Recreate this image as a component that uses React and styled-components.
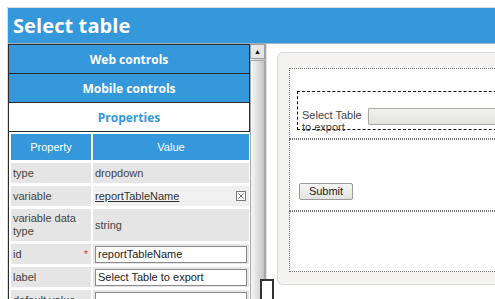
import React from "react";
import styled, { createGlobalStyle } from "styled-components";

const GlobalStyle = createGlobalStyle`
  html, body {
    margin: 0;
    padding: 0;
    background: #fff;
    font-family: "Liberation Sans", Arial, sans-serif;
    overflow: hidden;
  }
`;

const blue = "#3498db";

const Frame = styled.div`
  position: relative;
  width: 495px;
  height: 299px;
  overflow: hidden;
  box-sizing: border-box;
  padding: 7px 0 0 7px;
`;

const Window = styled.div`
  border-top: 1px solid #dcdcdc;
  border-left: 1px solid #dcdcdc;
  height: 292px;
  display: flex;
  flex-direction: column;
`;

const Header = styled.div`
  height: 35px;
  flex-shrink: 0;
  background: ${blue};
  border-bottom: 1px solid #a3b3c2;
  color: #fff;
  font-family: "Open Sans", "Liberation Sans", sans-serif;
  font-weight: 700;
  font-size: 20px;
  line-height: 35px;
  padding-left: 5px;
  letter-spacing: 0.1px;
`;

const Body = styled.div`
  display: flex;
  flex: 1;
  min-height: 0;
`;

const LeftPanel = styled.div`
  width: 242px;
  flex-shrink: 0;
  border-left: 1px solid #2a2a2a;
  box-sizing: border-box;
  overflow: hidden;
`;

const Tab = styled.div`
  height: 30px;
  box-sizing: border-box;
  border: 1px solid #2a2a2a;
  border-left: none;
  margin-top: ${(p) => (p.$first ? "0" : "-1px")};
  background: ${(p) => (p.$active ? "#fff" : blue)};
  color: ${(p) => (p.$active ? blue : "#fff")};
  font-family: "Open Sans", "Liberation Sans", sans-serif;
  font-weight: 700;
  font-size: 12px;
  display: flex;
  align-items: center;
  justify-content: center;
`;

const PropTable = styled.table`
  border-collapse: separate;
  border-spacing: 2px 3px;
  margin-top: -1px;
  margin-left: 0;
  width: 242px;
  table-layout: fixed;
  font-size: 11px;
  color: #444;
`;

const HeadCell = styled.th`
  background: ${blue};
  color: #fff;
  font-weight: 400;
  height: 26px;
  padding: 0;
`;

const Cell = styled.td`
  position: relative;
  background: ${(p) => (p.$light ? "#f0f0f0" : "#e5e5e5")};
  height: ${(p) => p.$h || 20}px;
  padding: 0 2px;
  line-height: 13px;
  vertical-align: middle;
`;

const Required = styled.span`
  position: absolute;
  right: 3px;
  top: 4px;
  color: #e03030;
  font-size: 10px;
`;

const VarLink = styled.span`
  text-decoration: underline;
  color: #333;
`;

const ClearIcon = styled.svg`
  position: absolute;
  right: 3px;
  top: 5px;
`;

const TextInput = styled.input`
  display: block;
  box-sizing: border-box;
  width: 152px;
  height: 17px;
  border: 1px solid #8a8a8a;
  padding: 0 2px;
  font-family: "Liberation Sans", Arial, sans-serif;
  font-size: 11px;
  color: #222;
  background: #fff;
`;

const Scrollbar = styled.div`
  width: 15px;
  flex-shrink: 0;
  border-right: 1px solid #a8a8a8;
  background: linear-gradient(to right, #ededed, #c9c9c9);
  display: flex;
  flex-direction: column;
`;

const ScrollButton = styled.div`
  height: 15px;
  box-sizing: border-box;
  border: 1px solid #a0a0a0;
  background: #e6e6e6;
  display: flex;
  align-items: center;
  justify-content: center;
  font-size: 7px;
  color: #000;
`;

const ScrollThumb = styled.div`
  flex: 1;
  margin-top: 1px;
  border: 1px solid #a9a9a9;
  border-bottom: none;
  background: linear-gradient(to right, #f6f6f6, #d6d6d6 70%, #c4c4c4);
`;

const Canvas = styled.div`
  flex: 1;
  background: #fff;
  padding: 8px 0 0 10px;
  border-left: 1px solid #e2e2e2;
  overflow: hidden;
`;

const Card = styled.div`
  width: 240px;
  height: 233px;
  box-sizing: border-box;
  background: #f4f3f1;
  border: 1px solid #dcdcda;
  border-right: none;
  border-radius: 6px 0 0 6px;
  padding: 15px 0 0 11px;
`;

const Section = styled.div`
  height: ${(p) => p.$h}px;
  box-sizing: border-box;
  border: 1px dotted #777;
  border-right: none;
  background: #fff;
  padding: ${(p) => p.$pad};
`;

const FieldBox = styled.div`
  height: 39px;
  box-sizing: border-box;
  border: 1px dashed #111;
  border-right: none;
  display: flex;
  align-items: flex-start;
  padding: 17px 0 0 4px;
`;

const FieldLabel = styled.div`
  width: 66px;
  flex-shrink: 0;
  font-size: 11px;
  line-height: 12px;
  color: #444;
`;

const SelectBox = styled.div`
  flex: 1;
  height: 17px;
  margin-top: -1px;
  box-sizing: border-box;
  border: 1px solid #a8a8a4;
  border-right: none;
  border-radius: 2px 0 0 2px;
  background: linear-gradient(#f2f2f0, #e2e2de);
`;

const Button = styled.button`
  width: 54px;
  height: 17px;
  box-sizing: border-box;
  border: 1px solid #9a9a98;
  border-radius: 2px;
  background: linear-gradient(#f6f6f4, #e2e2de);
  font-family: "Liberation Sans", Arial, sans-serif;
  font-size: 11px;
  color: #222;
  padding: 0;
`;

const ResizeHandle = styled.div`
  position: absolute;
  left: 260px;
  top: 279px;
  width: 10px;
  height: 30px;
  border: 2px solid #333;
  background: #fff;
`;

const rows = [
  { name: "type", value: "dropdown" },
  { name: "variable", link: "reportTableName" },
  { name: "variable data type", value: "string", h: 32 },
  { name: "id", input: "reportTableName", required: true },
  { name: "label", input: "Select Table to export" },
  { name: "default value", input: "" },
];

function PropertyRow({ row }) {
  return (
    <tr>
      <Cell $h={row.h}>
        {row.name}
        {row.required && <Required>*</Required>}
      </Cell>
      <Cell $h={row.h} $light={!!row.link}>
        {row.value}
        {row.link && (
          <>
            <VarLink>{row.link}</VarLink>
            <ClearIcon width="10" height="10" viewBox="0 0 10 10">
              <rect x="0.5" y="0.5" width="9" height="9" fill="#f4f4f4" stroke="#777" />
              <path d="M2.5 2.5 L7.5 7.5 M7.5 2.5 L2.5 7.5" stroke="#777" strokeWidth="1" />
            </ClearIcon>
          </>
        )}
        {row.input !== undefined && <TextInput defaultValue={row.input} />}
      </Cell>
    </tr>
  );
}

export default function App() {
  return (
    <Frame>
      <GlobalStyle />
      <Window>
        <Header>Select table</Header>
        <Body>
          <LeftPanel>
            <Tab $first>Web controls</Tab>
            <Tab>Mobile controls</Tab>
            <Tab $active>Properties</Tab>
            <PropTable>
              <colgroup>
                <col style={{ width: "80px" }} />
                <col />
              </colgroup>
              <thead>
                <tr>
                  <HeadCell>Property</HeadCell>
                  <HeadCell>Value</HeadCell>
                </tr>
              </thead>
              <tbody>
                {rows.map((r) => (
                  <PropertyRow key={r.name} row={r} />
                ))}
              </tbody>
            </PropTable>
          </LeftPanel>
          <Scrollbar>
            <ScrollButton>▲</ScrollButton>
            <ScrollThumb />
          </Scrollbar>
          <Canvas>
            <Card>
              <Section $h={71} $pad="22px 0 0 7px">
                <FieldBox>
                  <FieldLabel>Select Table to export</FieldLabel>
                  <SelectBox />
                </FieldBox>
              </Section>
              <Section $h={72} $pad="41px 0 0 9px">
                <Button>Submit</Button>
              </Section>
              <Section $h={61} $pad="0" />
            </Card>
          </Canvas>
        </Body>
      </Window>
      <ResizeHandle />
    </Frame>
  );
}
